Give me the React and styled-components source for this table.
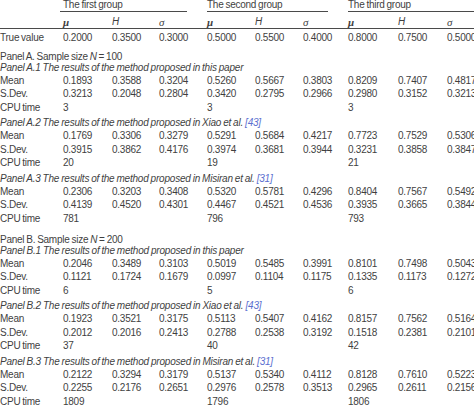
import React from "react";
import styled, { createGlobalStyle } from "styled-components";

const GlobalStyle = createGlobalStyle`
  html, body {
    margin: 0;
    padding: 0;
    background: #ffffff;
    overflow: hidden;
  }
  body {
    font-family: "Liberation Sans", Arial, sans-serif;
    color: #3f3f3f;
  }
`;

const COLS = "63px 49px 47px 48px 48px 48px 45px 50px 49px 60px";

// Table wrapper
const Table = styled.div`
  width: 474px;
  font-size: 10px;
  letter-spacing: -0.25px;
  word-spacing: -0.6px;
  white-space: nowrap;
`;

const Row = styled.div`
  display: grid;
  grid-template-columns: ${COLS};
  line-height: ${(p) => p.$lh || "13.5px"};
  margin-top: ${(p) => p.$mt || "0px"};
`;

const GroupRow = styled(Row)`
  line-height: 11px;
  margin-top: -1px;
`;

const GroupCell = styled.div`
  grid-column: span 3;
  border-bottom: 1px solid #4a4a4a;
  margin-right: 20px;
  margin-left: ${(p) => (p.$first ? "-3px" : "0px")};
  padding-left: ${(p) => (p.$first ? "3px" : "0px")};
  padding-bottom: 1px;
`;

const SymbolRow = styled(Row)`
  line-height: 12px;
  padding-top: 4px;
  border-bottom: 1px solid #4a4a4a;
  width: 520px;
`;

const Sym = styled.div`
  font-style: italic;
  font-family: ${(p) => (p.$greek ? '"Liberation Serif", "DejaVu Serif", serif' : '"Liberation Sans", Arial, sans-serif')};
  font-size: ${(p) => (p.$greek ? "11px" : "10px")};
  font-weight: ${(p) => (p.$bold ? 700 : 400)};
`;

const Cell = styled.div``;

const FullCell = styled.div`
  grid-column: 1 / -1;
  font-style: ${(p) => (p.$italic ? "italic" : "normal")};
  letter-spacing: ${(p) => (p.$italic ? "-0.2px" : "-0.25px")};
`;

const Cite = styled.span`
  color: #5b6fd0;
`;

const Var = styled.span`
  font-style: italic;
`;

const trueValues = ["0.2000", "0.3500", "0.3000", "0.5000", "0.5500", "0.4000", "0.8000", "0.7500", "0.5000"];

const panels = [
  {
    title: "Panel A. Sample size",
    n: "100",
    gap: "6.5px",
    subs: [
      {
        id: "A.1",
        source: "this paper",
        mean: ["0.1893", "0.3588", "0.3204", "0.5260", "0.5667", "0.3803", "0.8209", "0.7407", "0.4817"],
        sd: ["0.3213", "0.2048", "0.2804", "0.3420", "0.2795", "0.2966", "0.2980", "0.3152", "0.3213"],
        cpu: ["3", "3", "3"],
      },
      {
        id: "A.2",
        source: "Xiao et al.",
        cite: "[43]",
        mean: ["0.1769", "0.3306", "0.3279", "0.5291", "0.5684", "0.4217", "0.7723", "0.7529", "0.5306"],
        sd: ["0.3915", "0.3862", "0.4176", "0.3974", "0.3681", "0.3944", "0.3231", "0.3858", "0.3847"],
        cpu: ["20", "19", "21"],
      },
      {
        id: "A.3",
        source: "Misiran et al.",
        cite: "[31]",
        mean: ["0.2306", "0.3203", "0.3408", "0.5320", "0.5781", "0.4296", "0.8404", "0.7567", "0.5492"],
        sd: ["0.4139", "0.4520", "0.4301", "0.4467", "0.4521", "0.4536", "0.3935", "0.3665", "0.3844"],
        cpu: ["781", "796", "793"],
      },
    ],
  },
  {
    title: "Panel B. Sample size",
    n: "200",
    gap: "8.5px",
    subs: [
      {
        id: "B.1",
        source: "this paper",
        mean: ["0.2046", "0.3489", "0.3103", "0.5019", "0.5485", "0.3991", "0.8101", "0.7498", "0.5043"],
        sd: ["0.1121", "0.1724", "0.1679", "0.0997", "0.1104", "0.1175", "0.1335", "0.1173", "0.1272"],
        cpu: ["6", "5", "6"],
      },
      {
        id: "B.2",
        source: "Xiao et al.",
        cite: "[43]",
        mean: ["0.1923", "0.3521", "0.3175", "0.5113", "0.5407", "0.4162", "0.8157", "0.7562", "0.5164"],
        sd: ["0.2012", "0.2016", "0.2413", "0.2788", "0.2538", "0.3192", "0.1518", "0.2381", "0.2101"],
        cpu: ["37", "40", "42"],
      },
      {
        id: "B.3",
        source: "Misiran et al.",
        cite: "[31]",
        mean: ["0.2122", "0.3294", "0.3179", "0.5137", "0.5340", "0.4112", "0.8128", "0.7610", "0.5223"],
        sd: ["0.2255", "0.2176", "0.2651", "0.2976", "0.2578", "0.3513", "0.2965", "0.2611", "0.2156"],
        cpu: ["1809", "1796", "1806"],
      },
    ],
  },
];

function DataRow({ label, values }) {
  return (
    <Row>
      <Cell>{label}</Cell>
      {values.map((v, i) => (
        <Cell key={i}>{v}</Cell>
      ))}
    </Row>
  );
}

function CpuRow({ values }) {
  return (
    <Row>
      <Cell>CPU time</Cell>
      <Cell>{values[0]}</Cell>
      <Cell />
      <Cell />
      <Cell>{values[1]}</Cell>
      <Cell />
      <Cell />
      <Cell>{values[2]}</Cell>
    </Row>
  );
}

function App() {
  return (
    <>
      <GlobalStyle />
      <Table>
        <GroupRow>
          <Cell />
          <GroupCell $first>The first group</GroupCell>
          <GroupCell>The second group</GroupCell>
          <GroupCell>The third group</GroupCell>
        </GroupRow>

        <SymbolRow>
          <Cell />
          {[0, 1, 2].map((g) => (
            <React.Fragment key={g}>
              <Sym $greek $bold>μ</Sym>
              <Sym>H</Sym>
              <Sym $greek>σ</Sym>
            </React.Fragment>
          ))}
        </SymbolRow>

        <Row $lh="12px" $mt="3px">
          <Cell>True value</Cell>
          {trueValues.map((v, i) => (
            <Cell key={i}>{v}</Cell>
          ))}
        </Row>

        {panels.map((panel) => (
          <React.Fragment key={panel.title}>
            <Row $lh="11px" $mt={panel.gap}>
              <FullCell>
                {panel.title} <Var>N</Var> = {panel.n}
              </FullCell>
            </Row>
            {panel.subs.map((sub, i) => (
              <React.Fragment key={sub.id}>
                <Row $lh="12px" $mt={i === 0 ? "0px" : "3px"}>
                  <FullCell $italic>
                    Panel {sub.id} The results of the method proposed in {sub.source}
                    {sub.cite && <> <Cite>{sub.cite}</Cite></>}
                  </FullCell>
                </Row>
                <DataRow label="Mean" values={sub.mean} />
                <DataRow label="S.Dev." values={sub.sd} />
                <CpuRow values={sub.cpu} />
              </React.Fragment>
            ))}
          </React.Fragment>
        ))}
      </Table>
    </>
  );
}

export default App;
